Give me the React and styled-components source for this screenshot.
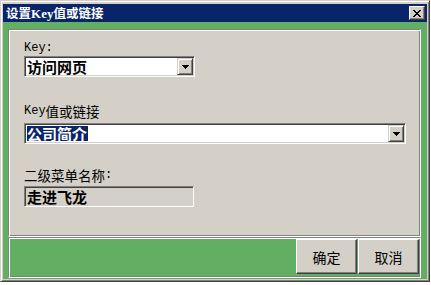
import React from "react";
import styled, { createGlobalStyle } from "styled-components";

const GlobalStyle = createGlobalStyle`
  html, body { margin: 0; padding: 0; background: #ffffff; }
  body { font-family: "Noto Sans CJK SC", "Liberation Sans", sans-serif; }
`;

const CJK = `"Noto Sans CJK SC", "Liberation Sans", sans-serif`;
const GRAY = "#D4D0C8";
const GREEN = "#62AE62";
const NAVY = "#0A246A";

const Window = styled.div`
  box-sizing: border-box;
  width: 430px;
  height: 282px;
  display: flex;
  flex-direction: column;
  background: ${GRAY};
  border: 1px solid;
  border-color: ${GRAY} #404040 #404040 ${GRAY};
  box-shadow: inset 1px 1px #ffffff, inset -1px -1px #808080;
  padding: 3px 2px 2px 2px;
`;

const TitleBar = styled.div`
  height: 18px;
  flex: none;
  display: flex;
  align-items: center;
  justify-content: space-between;
  background: ${NAVY};
  padding: 0 2px 0 3px;
`;

const TitleText = styled.span`
  color: #ffffff;
  font-family: ${CJK};
  font-weight: bold;
  font-size: 12.5px;
  line-height: 18px;
  white-space: nowrap;
`;

const TitleLat = styled.span`
  font-family: "Liberation Serif", serif;
  font-weight: bold;
  font-size: 13px;
`;

const CloseButton = styled.div`
  box-sizing: border-box;
  width: 16px;
  height: 14px;
  display: flex;
  align-items: center;
  justify-content: center;
  background: ${GRAY};
  border: 1px solid;
  border-color: #ffffff #404040 #404040 #ffffff;
  box-shadow: inset -1px -1px #808080;
`;

const Body = styled.div`
  flex: 1;
  display: flex;
  flex-direction: column;
  background: ${GREEN};
  padding: 7px 6px 1px 5px;
`;

const Groove = `
  box-sizing: border-box;
  border: 1px solid;
  border-color: #808080 #ffffff #ffffff #808080;
  box-shadow: inset 1px 1px #ffffff, inset -1px -1px #808080;
`;

const ContentPanel = styled.div`
  ${Groove}
  height: 208px;
  flex: none;
  background: ${GRAY};
  display: flex;
  flex-direction: column;
  align-items: flex-start;
  padding: 0 0 0 15px;
`;

const Label = styled.div`
  height: 16px;
  margin-top: ${(p) => p.$top}px;
  margin-bottom: ${(p) => p.$gap}px;
  font-family: ${CJK};
  font-size: 13.5px;
  line-height: 16px;
  color: #000000;
  white-space: nowrap;
  display: flex;
  align-items: center;
`;

const Lat = styled.span`
  font-family: "Liberation Mono", "Courier New", monospace;
  font-size: 12px;
  line-height: 16px;
`;

const Sunken = styled.div`
  box-sizing: border-box;
  width: ${(p) => p.$w}px;
  height: 21px;
  display: flex;
  align-items: center;
  background: ${(p) => (p.$disabled ? GRAY : "#ffffff")};
  border: 1px solid;
  border-color: #808080 #ffffff #ffffff #808080;
  box-shadow: inset 1px 1px #404040, inset -1px -1px ${GRAY};
  padding: 1px;
`;

const FieldText = styled.span`
  flex: 1;
  font-family: ${CJK};
  font-weight: bold;
  font-size: 15px;
  line-height: 17px;
  color: #000000;
  padding-left: 1px;
  white-space: nowrap;
`;

const Selected = styled.span`
  display: inline-block;
  background: ${NAVY};
  color: #ffffff;
  line-height: 15px;
  padding: 0 1px 0 0;
`;

const DropButton = styled.div`
  box-sizing: border-box;
  width: 16px;
  height: 17px;
  flex: none;
  display: flex;
  align-items: center;
  justify-content: center;
  background: ${GRAY};
  border: 1px solid;
  border-color: ${GRAY} #404040 #404040 ${GRAY};
  box-shadow: inset 1px 1px #ffffff, inset -1px -1px #808080;
`;

const ButtonPanel = styled.div`
  ${Groove}
  height: 41px;
  flex: none;
  background: ${GREEN};
  display: flex;
  justify-content: flex-end;
  align-items: flex-start;
  gap: 1px;
  padding: 1px 1px 0 0;
`;

const Button = styled.div`
  box-sizing: border-box;
  width: ${(p) => p.$w}px;
  height: 35px;
  display: flex;
  align-items: center;
  justify-content: center;
  background: ${GRAY};
  border: 1px solid;
  border-color: #ffffff #404040 #404040 #ffffff;
  box-shadow: inset -1px -1px #808080;
  font-family: ${CJK};
  font-size: 14px;
  color: #000000;
`;

const Arrow = () => (
  <svg width="7" height="4" viewBox="0 0 7 4" shapeRendering="crispEdges">
    <path d="M0 0h7v1H0zM1 1h5v1H1zM2 2h3v1H2zM3 3h1v1H3z" fill="#000" />
  </svg>
);

const CloseX = () => (
  <svg width="8" height="7" viewBox="0 0 8 7" shapeRendering="crispEdges">
    <path
      d="M0 0h2v1H0zM6 0h2v1H6zM1 1h2v1H1zM5 1h2v1H5zM2 2h4v1H2zM3 3h2v1H3zM2 4h4v1H2zM1 5h2v1H1zM5 5h2v1H5zM0 6h2v1H0zM6 6h2v1H6z"
      fill="#000"
    />
  </svg>
);

export default function App() {
  return (
    <>
      <GlobalStyle />
      <Window>
        <TitleBar>
          <TitleText>
            设置<TitleLat>Key</TitleLat>值或链接
          </TitleText>
          <CloseButton>
            <CloseX />
          </CloseButton>
        </TitleBar>
        <Body>
          <ContentPanel>
            <Label $top={10} $gap={0}>
              <Lat>Key:</Lat>
            </Label>
            <Sunken $w={171}>
              <FieldText>访问网页</FieldText>
              <DropButton>
                <Arrow />
              </DropButton>
            </Sunken>
            <Label $top={26} $gap={4}>
              <Lat>Key</Lat>值或链接
            </Label>
            <Sunken $w={382}>
              <FieldText>
                <Selected>公司简介</Selected>
              </FieldText>
              <DropButton>
                <Arrow />
              </DropButton>
            </Sunken>
            <Label $top={23} $gap={3}>
              二级菜单名称<Lat>:</Lat>
            </Label>
            <Sunken $w={170} $disabled>
              <FieldText>走进飞龙</FieldText>
            </Sunken>
          </ContentPanel>
          <ButtonPanel>
            <Button $w={61}>确定</Button>
            <Button $w={61}>取消</Button>
          </ButtonPanel>
        </Body>
      </Window>
    </>
  );
}
